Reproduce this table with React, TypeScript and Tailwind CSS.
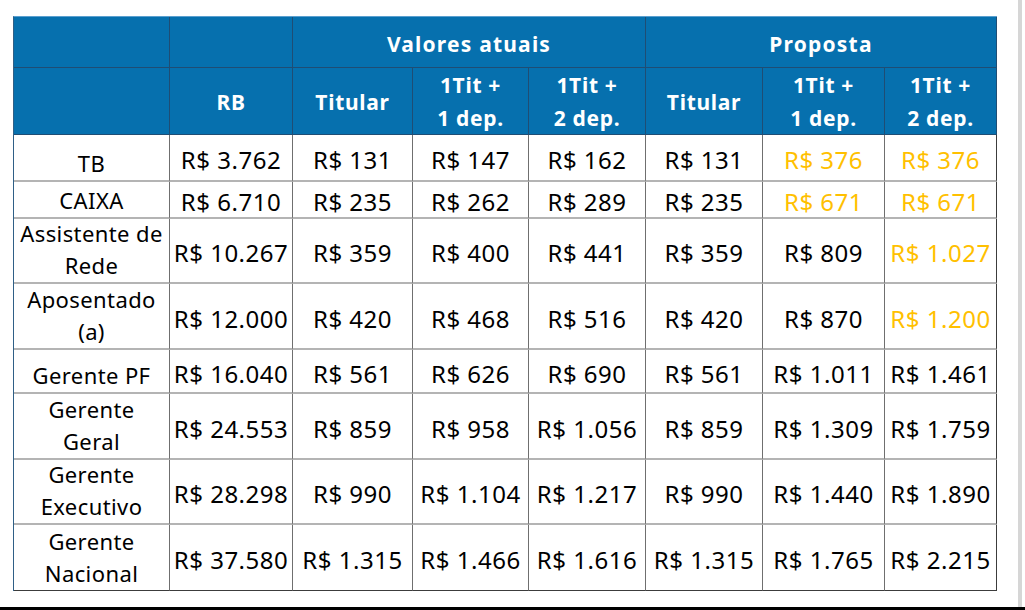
const rows: { label: string[]; values: string[]; gold: number[] }[] = [
  { label: ['TB'], values: ['3.762', '131', '147', '162', '131', '376', '376'], gold: [5, 6] },
  { label: ['CAIXA'], values: ['6.710', '235', '262', '289', '235', '671', '671'], gold: [5, 6] },
  { label: ['Assistente de', 'Rede'], values: ['10.267', '359', '400', '441', '359', '809', '1.027'], gold: [6] },
  { label: ['Aposentado', '(a)'], values: ['12.000', '420', '468', '516', '420', '870', '1.200'], gold: [6] },
  { label: ['Gerente PF'], values: ['16.040', '561', '626', '690', '561', '1.011', '1.461'], gold: [] },
  { label: ['Gerente', 'Geral'], values: ['24.553', '859', '958', '1.056', '859', '1.309', '1.759'], gold: [] },
  { label: ['Gerente', 'Executivo'], values: ['28.298', '990', '1.104', '1.217', '990', '1.440', '1.890'], gold: [] },
  { label: ['Gerente', 'Nacional'], values: ['37.580', '1.315', '1.466', '1.616', '1.315', '1.765', '2.215'], gold: [] },
]

const subHeads: string[][] = [['RB'], ['Titular'], ['1Tit +', '1 dep.'], ['1Tit +', '2 dep.'], ['Titular'], ['1Tit +', '1 dep.'], ['1Tit +', '2 dep.']]

export default function App() {
  return (
    <div className="w-[1025px] h-[610px] bg-white flex flex-col overflow-hidden font-['Noto_Sans',sans-serif]">
      <div className="h-[607px] flex">
        <div className="w-[1018px] pl-[13px] pt-[16px]">
          <div className="w-[984px] border-l border-l-[#2f5f86] border-t border-t-[#5a9fcf]">
            <div className="grid grid-cols-[156px_123px_120px_116px_117px_117px_122px_112px] grid-rows-[51px_67px_47px_37px_65px_66px_44px_66px_65px_66px]">
              {/* header row 1 */}
              <div className="bg-[#0670ae] border-r border-b border-[#1f4d74]" />
              <div className="bg-[#0670ae] border-r border-b border-[#1f4d74]" />
              <div className="col-span-3 bg-[#0670ae] border-r border-b border-[#1f4d74] flex items-center justify-center pt-[4px] text-white font-bold text-[21px] leading-[32px] tracking-[1.2px]">
                Valores atuais
              </div>
              <div className="col-span-3 bg-[#0670ae] border-r border-b border-[#1f4d74] flex items-center justify-center pt-[4px] text-white font-bold text-[21px] leading-[32px] tracking-[1.2px]">
                Proposta
              </div>

              {/* header row 2 */}
              <div className="bg-[#0670ae] border-r border-b border-[#1f4d74]" />
              {subHeads.map((h, i) => (
                <div
                  key={i}
                  className="bg-[#0670ae] border-r border-b border-[#1f4d74] flex flex-col items-center justify-center pt-[2px] text-white font-bold text-[21px] leading-[33px] tracking-[0.7px]"
                >
                  {h.map((l) => (
                    <span key={l}>{l}</span>
                  ))}
                </div>
              ))}

              {/* body */}
              {rows.map((r, ri) => {
                const last = ri === rows.length - 1
                const bottom = last ? 'border-b border-b-[#3c3c3c]' : 'border-b-2 border-b-[#b4b4b4]'
                return [
                  <div
                    key={`l${ri}`}
                    className={`border-r border-r-[#6f6f6f] ${bottom} flex flex-col items-center justify-end text-black text-[22px] leading-[32px] tracking-[0.4px] pb-[1px]`}
                  >
                    {r.label.map((l) => (
                      <span key={l} className="whitespace-nowrap">{l}</span>
                    ))}
                  </div>,
                  ...r.values.map((v, vi) => (
                    <div
                      key={`v${ri}-${vi}`}
                      className={`${vi === 6 ? 'border-r border-r-[#3c3c3c]' : 'border-r border-r-[#6f6f6f]'} ${bottom} flex items-center justify-center pt-[5px] text-[24px] leading-[30px] tracking-[0.5px] whitespace-nowrap ${r.gold.includes(vi) ? 'text-[#ffc000]' : 'text-black'}`}
                    >
                      R$ {v}
                    </div>
                  )),
                ]
              })}
            </div>
          </div>
        </div>
        <div className="w-[4px] bg-[#d6d6d6]" />
        <div className="flex-1 bg-white" />
      </div>
      <div className="h-[3px] bg-black" />
    </div>
  )
}
